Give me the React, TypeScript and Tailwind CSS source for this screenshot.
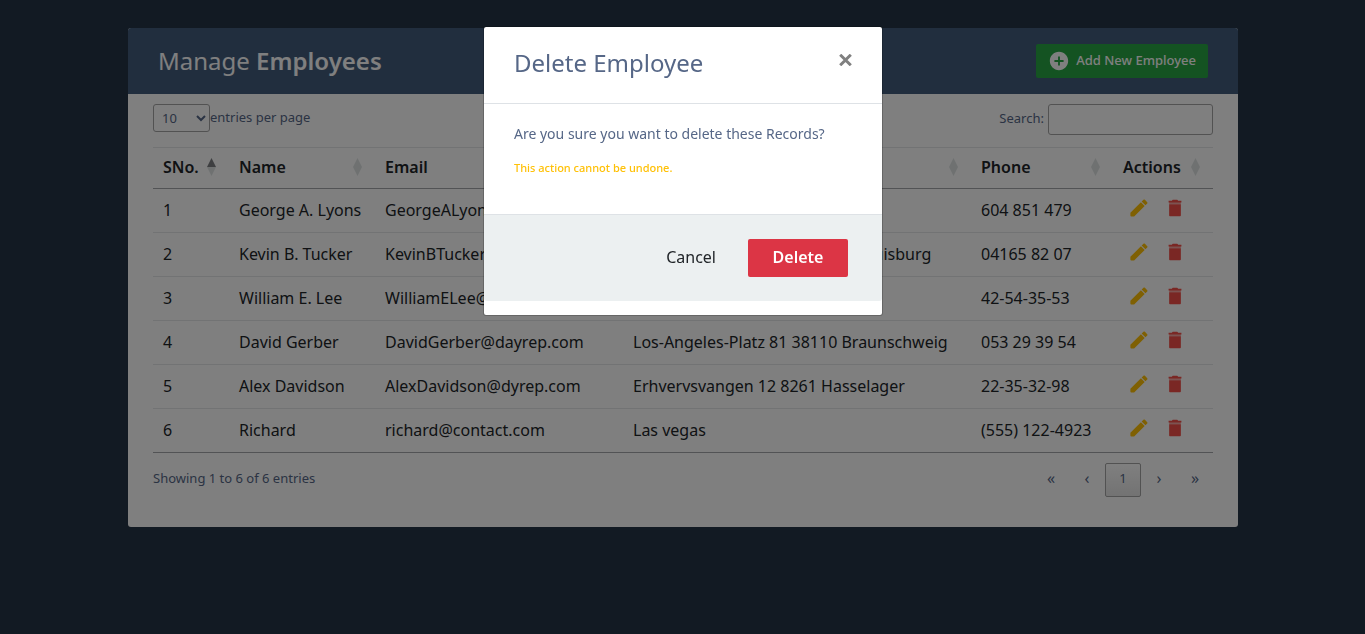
import { MdAddCircle } from "react-icons/md";

type Employee = { id: number; name: string; email: string; address: string; phone: string };

const employees: Employee[] = [
  { id: 1, name: "George A. Lyons", email: "GeorgeALyons@dayrep.com", address: "Hauptstrasse 12 10115 Berlin", phone: "604 851 479" },
  { id: 2, name: "Kevin B. Tucker", email: "KevinBTucker@dayrep.com", address: "Neuer Jungfernstieg 87 47051 Duisburg", phone: "04165 82 07" },
  { id: 3, name: "William E. Lee", email: "WilliamELee@dayrep.com", address: "Rue de Lyon 40", phone: "42-54-35-53" },
  { id: 4, name: "David Gerber", email: "DavidGerber@dayrep.com", address: "Los-Angeles-Platz 81 38110 Braunschweig", phone: "053 29 39 54" },
  { id: 5, name: "Alex Davidson", email: "AlexDavidson@dyrep.com", address: "Erhvervsvangen 12 8261 Hasselager", phone: "22-35-32-98" },
  { id: 6, name: "Richard", email: "richard@contact.com", address: "Las vegas", phone: "(555) 122-4923" },
];

const columns = [
  { label: "SNo.", width: "w-[76px]" },
  { label: "Name", width: "w-[146px]" },
  { label: "Email", width: "w-[248px]" },
  { label: "Address", width: "" },
  { label: "Phone", width: "w-[142px]" },
  { label: "Actions", width: "w-[100px]" },
];

function SortIcon({ ascending }: { ascending: boolean }) {
  return (
    <svg width="9" height="18" viewBox="0 0 9 18" className="shrink-0" aria-hidden="true">
      <path d="M4.5 0L9 9H0z" fill={ascending ? "#7d7f82" : "#dfe3e3"} />
      <path d="M0 9h9L4.5 18z" fill="#dfe3e3" />
    </svg>
  );
}

function PencilIcon() {
  return (
    <svg width="22" height="22" viewBox="0 0 24 24" fill="currentColor" aria-hidden="true">
      <path d="M2.600 17.300V20.200c0 .6.400 1 1 1H6.700L18.200 9.700 14.100 5.600 2.600 17.300zM21 7.100c.4-.4.4-1.100 0-1.500L18.400 3c-.4-.4-1.100-.4-1.500 0l-2 2 4.100 4.100z" />
    </svg>
  );
}

function TrashIcon() {
  return (
    <svg width="22" height="22" viewBox="0 0 24 24" fill="currentColor" aria-hidden="true">
      <path d="M5.600 7.800V19.800c0 .7.500 1.200 1.200 1.200h10.400c.7 0 1.200-.5 1.200-1.200V7.800z" />
      <path d="M5.600 5.500h12.800v2.500H5.600z" opacity="0.5" />
      <path d="M19 4h-3.500l-1-1h-5l-1 1H5v2h14z" />
    </svg>
  );
}

function EmployeeTable() {
  return (
    <table className="mt-3 w-full table-fixed border-collapse border-t border-b border-t-[#e4e6e8] border-b-[#a5a7aa] text-base text-[#212529]">
      <thead>
        <tr className="h-[41px] border-b border-[#a5a7aa]">
          {columns.map((column, index) => (
            <th key={column.label} className={`${column.width} pr-[13px] pb-0.5 pl-2.5 text-left font-semibold`}>
              <span className="flex items-center justify-between">
                {column.label}
                <SortIcon ascending={index === 0} />
              </span>
            </th>
          ))}
        </tr>
      </thead>
      <tbody>
        {employees.map((employee) => (
          <tr key={employee.id} className="h-11 border-b border-[#e4e6e8] last:border-[#a5a7aa]">
            <td className="px-2.5 pb-0.5">{employee.id}</td>
            <td className="px-2.5 pb-0.5 whitespace-nowrap">{employee.name}</td>
            <td className="px-2.5 pb-0.5 whitespace-nowrap">{employee.email}</td>
            <td className="px-2.5 pb-0.5 whitespace-nowrap">{employee.address}</td>
            <td className="px-2.5 pb-0.5 whitespace-nowrap">{employee.phone}</td>
            <td className="px-2.5">
              <span className="flex gap-3.5 pb-1.5 pl-[5px]">
                <button type="button" aria-label={`Edit ${employee.name}`} className="text-[#ffc107]">
                  <PencilIcon />
                </button>
                <button type="button" aria-label={`Delete ${employee.name}`} className="text-[#f44f48]">
                  <TrashIcon />
                </button>
              </span>
            </td>
          </tr>
        ))}
      </tbody>
    </table>
  );
}

function Pagination() {
  return (
    <nav aria-label="Table pages" className="flex">
      <button type="button" className="h-[34px] w-9 pb-1 text-base">«</button>
      <button type="button" className="h-[34px] w-9 pb-1 text-base">‹</button>
      <button type="button" className="h-[34px] w-9 rounded-xs border border-[#a4a4a4] bg-linear-to-b from-white to-[#e6e6e6] pb-0.5">1</button>
      <button type="button" className="h-[34px] w-9 pb-1 text-base">›</button>
      <button type="button" className="h-[34px] w-9 pb-1 text-base">»</button>
    </nav>
  );
}

function DeleteDialog() {
  return (
    <div className="fixed inset-0 flex items-start justify-center bg-black/50 pt-[26px] pl-px">
      <div role="dialog" aria-modal="true" aria-labelledby="dialog-title" className="w-full max-w-[400px] rounded-[3px] border border-black/20 bg-white bg-clip-padding pb-3.5 text-[#566787]">
        <div className="flex h-[77px] items-start justify-between border-b border-[#dee2e6] px-[30px] pt-5">
          <h4 id="dialog-title" className="text-2xl leading-8">Delete Employee</h4>
          <button type="button" aria-label="Close" className="pt-[7px] text-[#808080]">
            <svg width="13" height="12" viewBox="0 0 13 12" fill="none" stroke="currentColor" strokeWidth="3" aria-hidden="true">
              <path d="M1.2 0.8L11.8 11.2M11.8 0.8L1.2 11.2" />
            </svg>
          </button>
        </div>
        <div className="h-[110px] px-[30px] pt-5">
          <p className="text-sm leading-5">Are you sure you want to delete these Records?</p>
          <p className="mt-4 text-[11px] leading-4 font-medium text-[#ffc107]">This action cannot be undone.</p>
        </div>
        <div className="flex h-[87px] items-center justify-end gap-2 rounded-b-[3px] border-t border-[#dee2e6] bg-[#ecf0f1] pr-[34px] text-base">
          <button type="button" className="h-[38px] px-6 pb-0.5 text-[#212529]">Cancel</button>
          <button type="button" className="h-[38px] w-[100px] rounded-xs bg-[#dc3545] pb-0.5 font-semibold text-white">Delete</button>
        </div>
      </div>
    </div>
  );
}

export default function App() {
  return (
    <div className="min-h-screen bg-[#243546] pt-7 pl-px font-['Noto_Sans',sans-serif] text-[13px] text-[#566787]">
      <main className="mx-auto w-full max-w-[1110px] overflow-hidden rounded-[3px] bg-white">
        <header className="flex h-[66px] items-center justify-between bg-[#435d7d] px-[30px] text-white">
          <h2 className="text-2xl">
            Manage <span className="font-semibold">Employees</span>
          </h2>
          <button type="button" className="flex h-[34px] items-center gap-1.5 rounded-xs bg-[#28a745] px-3 text-[13px] font-medium">
            <MdAddCircle size={22} />
            Add New Employee
          </button>
        </header>
        <div className="px-[25px] pt-2.5 pb-[30px]">
          <div className="flex items-start justify-between">
            <label className="flex items-center">
              <select className="h-7 w-[57px] rounded-[3px] border border-[#a4a4a4] bg-white pl-1">
                <option>10</option>
                <option>25</option>
                <option>50</option>
              </select>
              entries per page
            </label>
            <label className="flex items-center gap-1">
              <span className="pb-0.5">Search:</span>
              <input type="search" className="h-[31px] w-[165px] rounded-[3px] border border-[#a4a4a4] px-1" />
            </label>
          </div>
          <EmployeeTable />
          <div className="mt-2.5 flex items-center justify-between">
            <p className="pb-0.5">Showing 1 to 6 of 6 entries</p>
            <Pagination />
          </div>
        </div>
      </main>
      <DeleteDialog />
    </div>
  );
}
